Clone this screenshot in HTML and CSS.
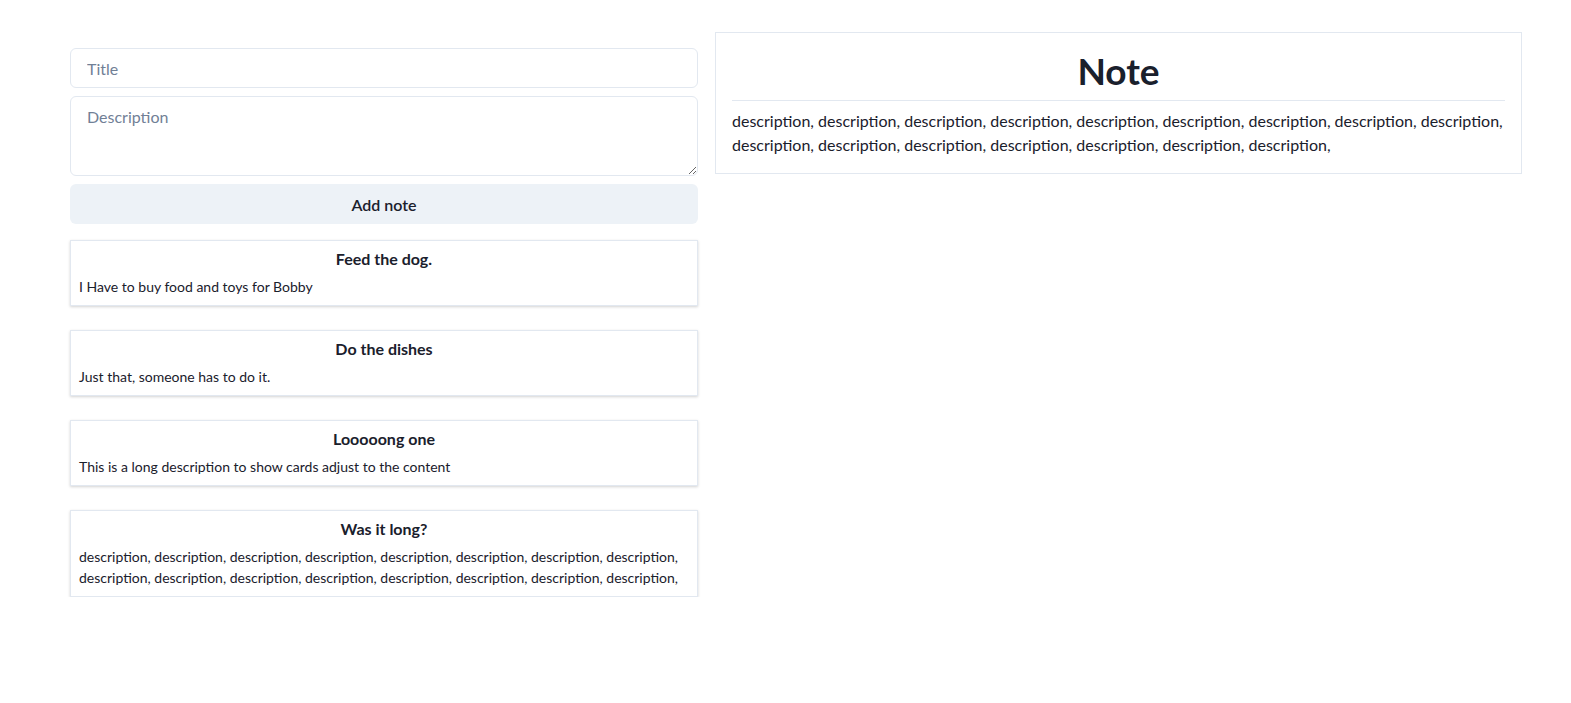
FILE: index.html
```html
<!DOCTYPE html>
<html>
<head>
<meta charset="utf-8">
<link rel="stylesheet" href="styles.css">
</head>
<body>
<div class="layout">
  <div class="left">
    <form class="form">
      <input class="field" type="text" placeholder="Title">
      <textarea class="field area" placeholder="Description"></textarea>
      <button type="button" class="add">Add note</button>
    </form>
    <div class="cards">
      <div class="card">
        <div class="card-title">Feed the dog.</div>
        <div class="card-text">I Have to buy food and toys for Bobby</div>
      </div>
      <div class="card">
        <div class="card-title">Do the dishes</div>
        <div class="card-text">Just that, someone has to do it.</div>
      </div>
      <div class="card">
        <div class="card-title">Looooong one</div>
        <div class="card-text">This is a long description to show cards adjust to the content</div>
      </div>
      <div class="card">
        <div class="card-title">Was it long?</div>
        <div class="card-text">description, description, description, description, description, description, description, description, description, description, description, description, description, description, description, description,</div>
      </div>
    </div>
  </div>
  <div class="right">
    <div class="panel">
      <h1 class="panel-title">Note</h1>
      <div class="panel-text">description, description, description, description, description, description, description, description, description, description, description, description, description, description, description, description,</div>
    </div>
  </div>
</div>
</body>
</html>
```
FILE: styles.css
```css
* { box-sizing: border-box; }
body {
  margin: 0;
  font-family: "Lato", "Noto Sans", sans-serif;
  color: #1a202c;
  background: #fff;
}
.layout {
  display: grid;
  grid-template-columns: 628px 807px;
  column-gap: 17px;
  padding: 32px 49px 0 70px;
  align-items: start;
}
.left { padding-top: 16px; }
.form { display: flex; flex-direction: column; gap: 8px; }
.field {
  width: 100%;
  height: 40px;
  border: 1px solid #e2e8f0;
  border-radius: 6px;
  padding: 0 16px;
  font: inherit;
  font-size: 16px;
  color: #1a202c;
  outline: none;
}
.field::placeholder { color: #718096; }
.area {
  height: 80px;
  padding: 8px 16px;
  line-height: 24px;
  resize: vertical;
}
.add {
  height: 40px;
  border: none;
  border-radius: 6px;
  background: #edf2f7;
  font: inherit;
  font-size: 16px;
  font-weight: 600;
  color: #1a202c;
}
.cards { margin-top: 16px; display: flex; flex-direction: column; gap: 24px; }
.card {
  border: 1px solid #e2e8f0;
  padding: 8px;
  box-shadow: 0 1px 3px rgba(0,0,0,0.12), 0 1px 2px rgba(0,0,0,0.06);
  background: #fff;
}
.card-title {
  font-size: 16px;
  font-weight: 700;
  text-align: center;
  line-height: 20px;
}
.card-text {
  margin-top: 7px;
  font-size: 14px;
  line-height: 21px;
}
.panel {
  border: 1px solid #e2e8f0;
  padding: 16px;
}
.panel-title {
  margin: 0;
  font-size: 37px;
  font-weight: 700;
  line-height: 44px;
  text-align: center;
  padding-bottom: 7px;
  border-bottom: 1px solid #e2e8f0;
}
.panel-text {
  margin-top: 8px;
  font-size: 16px;
  line-height: 24px;
}
```
